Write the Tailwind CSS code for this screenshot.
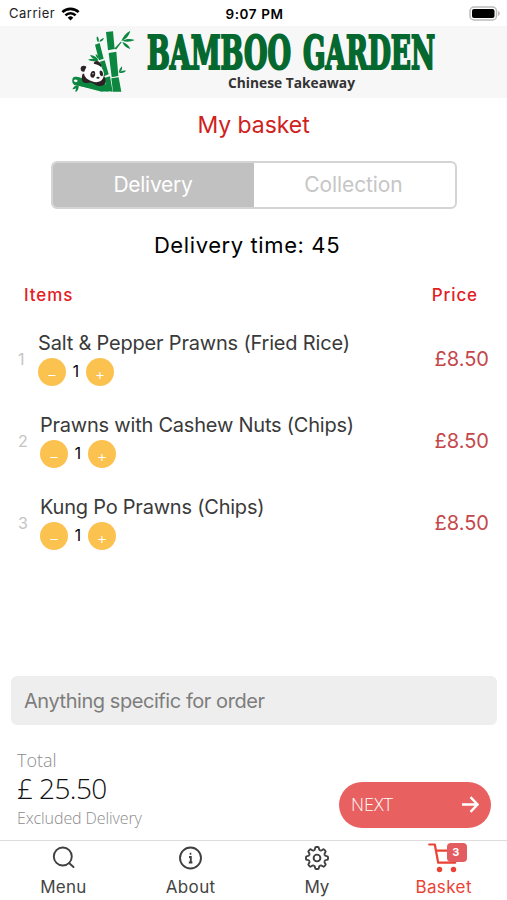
<!DOCTYPE html>
<html lang="en">
<head>
  <meta charset="UTF-8">
  <meta name="viewport" content="width=device-width, initial-scale=1.0">
  <title>Bamboo Garden - My basket</title>
  <script src="https://cdn.jsdelivr.net/npm/@tailwindcss/browser@4"></script>
</head>
<body class="bg-white h-[900px] flex flex-col overflow-hidden font-['Inter','Liberation_Sans',sans-serif]">

  <!-- Status bar -->
  <div class="h-[26px] shrink-0 grid grid-cols-3 items-center pl-[9px] pr-[7px] text-[13px] text-[#222]">
    <div class="flex items-center gap-[6px] pt-px">
      <span class="tracking-[0.5px]">Carrier</span>
      <svg class="w-[19px] h-[14px]" viewBox="0 0 19 14" fill="none" stroke="#000" stroke-width="2.6">
        <path d="M1.4 5.2a11.5 11.5 0 0 1 16.2 0M4.4 8.4a7.2 7.2 0 0 1 10.2 0"/>
        <path d="M9.5 13.6 6.7 10.7a4 4 0 0 1 5.6 0z" fill="#000" stroke="none"/>
      </svg>
    </div>
    <span class="text-center font-semibold text-black pt-[2px] text-[13.5px] tracking-[0.6px]">9:07 PM</span>
    <svg class="w-[31px] h-[15px] justify-self-end" viewBox="0 0 31 15">
      <rect x="1" y="1" width="26.5" height="13" rx="4" fill="#fff" stroke="#bbb" stroke-width="1.5"/>
      <rect x="3" y="3" width="22.5" height="9" rx="2" fill="#000"/>
      <path d="M29 5v5c1.3-.5 1.8-1.4 1.8-2.5S30.3 5.5 29 5z" fill="#bbb"/>
    </svg>
  </div>

  <!-- Logo -->
  <header class="h-[72px] shrink-0 bg-[#f7f7f7]">
    <svg class="w-[507px] h-[72px]" viewBox="0 26 507 72">
      <g transform="translate(60 25) scale(.33333)">
        <g fill="#0b8740">
          <path d="M138 21l21-2 5 53-20 4zM146 84l23-4 6 73-20 4zM154 160l22-3 8 43h-25zM105 59l14-5 12 47-14 5zM120 110l14-4 12 42-14 6zM134 158l16-4 8 46-18-2z"/>
          <path d="M38 160c3-6 14-5 20-3l50 19 28 1 12 12-3 11-14-2-88-18c-6-3-8-12-5-20z"/>
          <path d="M60 172l85 26-20 2-62-16z"/>
          <path d="M184 48c5-13 13-24 27-31-3 14-12 25-27 31zM187 47c13-6 24-6 37-2-13 6-25 7-37 2zM187 51c11 3 20 10 24 21-12-3-20-10-24-21zM162 72l20-22 3 2-16 21z"/>
          <path d="M115 52c-6-5-6-12-4-18 6 5 7 12 4 18zM118 50c2-6 7-9 14-11-2 7-7 11-14 11zM115 105c-10 0-20-5-25-15 12 1 20 6 25 15zM116 108c-10 2-22 1-32-4 12-5 24-3 32 4zM116 102c-6-4-9-9-9-15 7 3 10 8 9 15zM176 144c1-8 4-14 10-20 2 9-2 16-10 20zM178 143c6-6 12-8 20-6-5 6-12 8-20 6zM54 181c-1 7-7 12-17 12 3-7 9-12 17-12zM56 181c1 8-1 15-9 21-2-8 2-16 9-21z"/>
        </g>
        <path d="M41 166c4-4 10-3 12 2-3 5-10 5-12-2z" fill="#f7f7f7"/>
        <g fill="#2b2224">
          <path d="M68 146c-5 15-3 26 8 28 9 1 14-2 19-1l17 9c10 4 24-2 25-11 1-10-4-18-9-25z"/>
          <circle cx="71" cy="131" r="9"/>
          <path d="M101 115c2-9 14-10 20-1 5 8 3 15-3 18z"/>
        </g>
        <path d="M74 137c5-15 22-26 40-17 15 7 22 25 15 40-6 12-20 14-33 9-17-6-28-18-22-32z" fill="#fff"/>
        <g fill="#2b2224">
          <path d="M91 150c0-7 5-14 11-12 6 3 4 17-2 20-6 1-9-3-9-8z"/>
          <ellipse cx="124" cy="145" rx="5" ry="9" transform="rotate(-15 124 145)"/>
          <ellipse cx="114" cy="158" rx="5" ry="3"/>
        </g>
        <circle cx="99" cy="146" r="2" fill="#fff"/>
      </g>
      <g class="font-['DejaVu_Serif_Condensed','DejaVu_Serif',serif]" font-size="46" font-weight="700" fill="#04682f" stroke="#04682f" stroke-width="2.2">
        <text x="147" y="69.2" textLength="144" lengthAdjust="spacingAndGlyphs">BAMBOO</text>
        <text x="303" y="69.2" textLength="132" lengthAdjust="spacingAndGlyphs">GARDEN</text>
      </g>
      <text class="font-['Open_Sans',sans-serif]" x="228" y="88" font-size="15" font-weight="700" fill="#333" textLength="127" lengthAdjust="spacingAndGlyphs">Chinese Takeaway</text>
    </svg>
  </header>

  <main class="flex-1 flex flex-col">
    <h1 class="mt-[11px] h-8 leading-8 text-center text-[23px] tracking-[-0.05px] text-[#d0211c]">My basket</h1>

    <div class="mt-[20px] mx-auto w-[406px] h-[48px] flex rounded-md border-2 border-[#d4d4d4] overflow-hidden text-[21px] text-center leading-[44px]">
      <div class="w-[203px] bg-[#c1c1c1] text-white -m-0.5 p-0.5 pl-1 tracking-[-0.25px]">Delivery</div>
      <div class="flex-1 text-[#c6c6c6] tracking-[-0.1px] pl-px">Collection</div>
    </div>

    <p class="mt-[20px] h-8 leading-8 pr-[13px] text-center text-[22px] tracking-[0.6px] text-black">Delivery time: 45</p>

    <div class="mt-[22px] h-6 leading-6 pl-6 pr-[29px] flex justify-between text-[17px] font-medium tracking-[0.9px] text-[#e3201f]">
      <span>Items</span>
      <span>Price</span>
    </div>

    <!-- Basket items -->
    <ul class="mt-[11px]">
      <li class="h-[82px] flex items-center px-[18px]">
        <span class="w-5 text-[16px] text-[#c4c4c4]">1</span>
        <div class="flex-1 -mt-[2px]">
          <div class="h-[26px] leading-[26px] text-[20px] tracking-[-0.19px] text-[#3a3a3a]">Salt &amp; Pepper Prawns (Fried Rice)</div>
          <div class="mt-[2px] flex items-center">
            <button class="size-7 rounded-full bg-[#fcc250] text-white text-[16px] font-light leading-8">−</button>
            <span class="w-5 text-center text-[15.5px] text-black">1</span>
            <button class="size-7 rounded-full bg-[#fcc250] text-white text-[16px] font-light leading-8">+</button>
          </div>
        </div>
        <span class="text-[20px] text-[#c4484b]">£8.50</span>
      </li>
      <li class="h-[82px] flex items-center px-[18px]">
        <span class="w-[22px] text-[16px] text-[#c4c4c4]">2</span>
        <div class="flex-1 -mt-[2px]">
          <div class="h-[26px] leading-[26px] text-[20px] tracking-[-0.22px] text-[#3a3a3a]">Prawns with Cashew Nuts (Chips)</div>
          <div class="mt-[2px] flex items-center">
            <button class="size-7 rounded-full bg-[#fcc250] text-white text-[16px] font-light leading-8">−</button>
            <span class="w-5 text-center text-[15.5px] text-black">1</span>
            <button class="size-7 rounded-full bg-[#fcc250] text-white text-[16px] font-light leading-8">+</button>
          </div>
        </div>
        <span class="text-[20px] text-[#c4484b]">£8.50</span>
      </li>
      <li class="h-[82px] flex items-center px-[18px]">
        <span class="w-[22px] text-[16px] text-[#c4c4c4]">3</span>
        <div class="flex-1 -mt-[2px]">
          <div class="h-[26px] leading-[26px] text-[20px] tracking-[-0.22px] text-[#3a3a3a]">Kung Po Prawns (Chips)</div>
          <div class="mt-[2px] flex items-center">
            <button class="size-7 rounded-full bg-[#fcc250] text-white text-[16px] font-light leading-8">−</button>
            <span class="w-5 text-center text-[15.5px] text-black">1</span>
            <button class="size-7 rounded-full bg-[#fcc250] text-white text-[16px] font-light leading-8">+</button>
          </div>
        </div>
        <span class="text-[20px] text-[#c4484b]">£8.50</span>
      </li>
    </ul>

    <div class="mt-auto ml-[11px] mr-[10px] h-[49px] leading-[50px] pl-[13px] rounded-md bg-[#eeeeee] text-[20px] tracking-[-0.44px] text-[#7d7d7d]">Anything specific for order</div>

    <!-- Total and next -->
    <div class="h-[115px] pl-[17px] pr-4 flex justify-between font-['Open_Sans',sans-serif] font-light">
      <div class="pt-[23px]">
        <p class="h-6 leading-6 text-[18px] text-[#8c8c8c]">Total</p>
        <p class="h-8 leading-8 text-[28px] tracking-[-0.6px] text-[#111]">£ 25.50</p>
        <p class="h-[26px] leading-[28px] text-[16px] tracking-[-0.1px] text-[#8c8c8c]">Excluded Delivery</p>
      </div>
      <button class="mt-[57px] w-[152px] h-[46px] pl-3 pr-[12px] rounded-full bg-[#e86060] flex items-center justify-between text-white text-[18px] tracking-[0]">
        <span class="-mt-px">NEXT</span>
        <svg class="w-[18px] h-[18px] -mt-px" viewBox="0 0 18 18" fill="none" stroke="#fff" stroke-width="2.4">
          <path d="M1 8.5h15.500M9.500 1.200l7 7.300-7 7.300"/>
        </svg>
      </button>
    </div>
  </main>

  <!-- Tab bar -->
  <nav class="h-[60px] shrink-0 border-t border-[#dcdcdc] grid grid-cols-4 text-center text-[17px] text-[#444]">
    <a class="flex flex-col items-center pt-1">
      <svg class="size-6" viewBox="0 0 24 24" fill="none" stroke="#3f3f3f" stroke-width="1.9" stroke-linecap="round">
        <circle cx="11.8" cy="11.5" r="9"/>
        <path d="M18.3 18.2l4.200 3.800"/>
      </svg>
      <span class="mt-[6px] leading-6 tracking-[0.2px]">Menu</span>
    </a>
    <a class="flex flex-col items-center pt-[5px]">
      <svg class="size-6" viewBox="0 0 24 24" fill="none" stroke="#3f3f3f" stroke-width="1.9">
        <circle cx="12.5" cy="12" r="10.5"/>
        <path d="M11 11h1.800v5.500M10.800 16.500h3.600M11.700 7.800h1.600"/>
      </svg>
      <span class="mt-[5px] leading-6 tracking-[0.4px] pl-px">About</span>
    </a>
    <a class="flex flex-col items-center pt-[5px]">
      <svg class="size-6 overflow-visible" viewBox="-12 -12 24 24" fill="none" stroke="#3f3f3f" stroke-width="1.9" stroke-linejoin="round">
        <path id="tooth" d="M-3.140-7.600C-2.300-8-2-8.400-1.900-9.600Q-1.800-11-.9-11H.9Q1.800-11 1.900-9.600C2-8.400 2.300-8 3.140-7.600"/>
        <use href="#tooth" transform="rotate(45)"/>
        <use href="#tooth" transform="rotate(90)"/>
        <use href="#tooth" transform="rotate(135)"/>
        <use href="#tooth" transform="rotate(180)"/>
        <use href="#tooth" transform="rotate(225)"/>
        <use href="#tooth" transform="rotate(270)"/>
        <use href="#tooth" transform="rotate(315)"/>
        <circle r="3.4"/>
      </svg>
      <span class="mt-[5px] leading-6">My</span>
    </a>
    <a class="relative flex flex-col items-center pt-[2px] text-[#ea4335]">
      <svg class="w-[30px] h-[30px] -ml-0.5" viewBox="0 0 30 30" fill="none" stroke="#ea4335" stroke-width="2.2" stroke-linecap="round" stroke-linejoin="round">
        <path d="M1.200 1.500h5.600l3.400 18.200h17M7.800 7.700h20.500l-2.600 11"/>
        <circle cx="11.500" cy="26.500" r="2.7" fill="#ea4335" stroke="none"/>
        <circle cx="25.500" cy="26.500" r="2.7" fill="#ea4335" stroke="none"/>
      </svg>
      <span class="leading-6 mt-[2px] tracking-[0.4px]">Basket</span>
      <span class="absolute left-[67px] top-[2px] w-[20px] h-[19px] rounded bg-[#e35d60] text-white text-[11px] leading-[19px] font-bold pr-[3px]">3</span>
    </a>
  </nav>

</body>
</html>
